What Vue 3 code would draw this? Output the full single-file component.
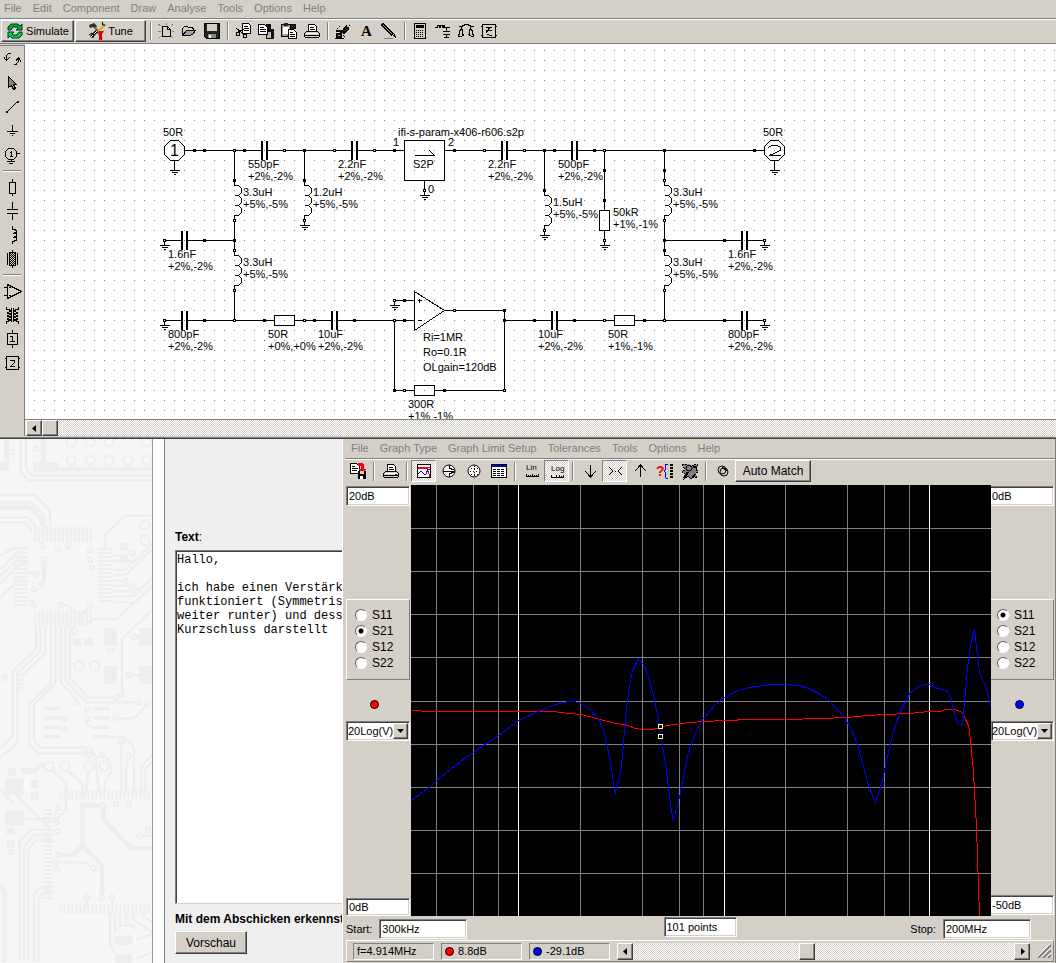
<template>
  <div class="desktop">
    <header>
      <nav class="menubar">
        <a v-for="item in mainMenu" :key="item" href="#">{{ item }}</a>
      </nav>
      <div class="toolbar">
        <button class="raised sim-btn">
          <svg width="18" height="18" viewBox="0 0 18 18" v-html="icons.simulate"></svg>
          Simulate
        </button>
        <button class="raised tune-btn">
          <svg width="18" height="18" viewBox="0 0 18 18" v-html="icons.tune"></svg>
          Tune
        </button>
        <template v-for="(group, g) in mainTools" :key="g">
          <span class="sep"></span>
          <button v-for="name in group" :key="name" class="tool" :aria-label="name">
            <svg width="16" height="16" viewBox="0 0 16 16" v-html="icons[name]"></svg>
          </button>
        </template>
      </div>
    </header>

    <section class="workspace">
      <div class="palette">
        <template v-for="(group, g) in paletteTools" :key="g">
          <span v-if="g" class="hsep"></span>
          <button v-for="name in group" :key="name" class="tool" :aria-label="name">
            <svg width="20" height="20" viewBox="0 0 20 20" v-html="icons[name]"></svg>
          </button>
        </template>
      </div>
      <div class="canvas">
        <svg class="schematic">
          <defs>
            <pattern id="grid" width="10" height="10" patternUnits="userSpaceOnUse" x="9" y="6">
              <rect width="1" height="1" fill="#808080" />
            </pattern>
          </defs>
          <rect width="100%" height="100%" fill="url(#grid)" />
          <!-- drawing uses the sheet coordinates, the sheet starts at 25,44 -->
          <g transform="translate(-25 -44)">
            <g class="lines" transform="translate(.5 .5)">
              <path :d="wires" />
              <path v-for="c in grounds" :key="'g' + c" :d="groundPath(c)" />
              <path v-for="(p, i) in parts" :key="'p' + i" :d="partPath(p)" />
              <g v-for="(p, i) in caps" :key="'c' + i" class="solid">
                <rect :x="p.x - 3" :y="p.y - 9" width="1" height="18" />
                <rect :x="p.x + 2" :y="p.y - 9" width="1" height="18" />
              </g>
              <path d="M170 140h8l6 6v8l-6 6h-8l-6-6v-8z M770 140h8l6 6v8l-6 6h-8l-6-6v-8z" />
              <path d="M404 140h40v40h-40z" />
              <path d="M414 155h20l-5-5" />
              <path d="M414 291l30 19-30 20z" />
              <path d="M417 300h4M419 298v4M417 320h4" />
              <path d="M768 147l3-2h6l3 2v3l-11 5h11" />
              <rect v-for="n in filled" :key="'f' + n" class="solid" :x="n[0] - 1" :y="n[1] - 1" width="2" height="2" />
              <rect v-for="n in open" :key="'o' + n" class="blank" :x="n[0] - 1" :y="n[1] - 1" width="2" height="2" />
            </g>
            <g v-for="(p, i) in parts" :key="'t' + i">
              <text :x="labelX(p)" :y="labelY(p)">{{ p.value }}</text>
              <text :x="labelX(p)" :y="labelY(p) + 12">{{ p.tol }}</text>
            </g>
            <text v-for="t in notes" :key="t.text + t.x" :x="t.x" :y="t.y">{{ t.text }}</text>
            <text class="port" x="170" y="156">1</text>
          </g>
        </svg>
        <div class="scroll main-scroll">
          <button class="raised arrow" aria-label="Scroll left"><svg width="7" height="7" viewBox="0 0 7 7"><path d="M5 0v7L1 3.5z" /></svg></button>
          <span class="raised thumb"></span>
        </div>
      </div>
    </section>

    <section class="lower">
      <div class="pcb">
        <svg width="152" height="525" viewBox="0 0 456 1575" preserveAspectRatio="xMinYMin slice">
          <g class="trace">
            <path d="M62 0v98l22 26h372M78 0v88l18 22h360M0 168h106l44 46v50M0 190h94l40 40v34M0 236h84l22 22v20M0 250h74l18 18v12" />
            <path d="M315 326v-38l62-58h79M340 350h36l22-8M340 366h60l16-4M340 392h36l80-78M340 408h36l80-78M340 424h36M340 440h56M340 456h70M340 472h60l56-56M340 490h66l50-50" />
            <path d="M84 326H42L0 350M84 340H52L0 392M84 356H58L0 412M84 372H62L0 434M84 402h20M84 424h-30L0 478M84 486h18M132 360v64" />
            <path d="M108 560v70l-70 66v194L0 930M122 560v76l-70 66v210L0 956M136 560v82l-70 68" />
            <path d="M152 560v174l-64 60v120l28 30h154M166 560v174l-64 62v108l20 22h136M182 560v170l56 60M196 560v164l62 66h156M210 560v156l54 60h84M222 560v30" />
            <path d="M180 500h24l16 20M240 560v-30l30-24M256 560l20-20h76l104-100M366 770V600l90-88M386 708h36M410 594h46" />
            <path d="M180 838h12M180 866h12M262 838v20l18 8M348 838h54l42-44M300 894h70l32 30v138M364 908v154M386 950l-8 40v70M456 950l-32 32v80M456 970l-20 20v70" />
            <path d="M148 984l50 50v80l-18 18M192 984l56 52v40M264 984v20l-6 56M268 926l20 26v34l10 74M310 950l24 24v24l-20 30v32" />
            <path d="M42 1060l106 106M70 1140h92M0 1050l40 44M160 1172H92l-34 36v360M160 1188h-60l-28 34v346M160 1204h-54l-20 26v338M160 1345h-38l-20 20v203M160 1360h-30l-14 18v190" />
            <path d="M176 1270h80l22 18M414 1190h42M260 1376v24M336 1376v24M360 1420v40h40M378 1420v30l30 20M400 1420v20l56 40M430 1420v10l26 20M330 1420v100l30 40M345 1420v60M410 1500l46-14M410 1560l46-20" />
          </g>
          <g class="bus">
            <path d="M0 84h20V0M456 90H130V0M0 205h90l36 36v20M98 1002l20-22h30M248 1090v130l-30 28h-44M248 1100h62v40l84 88h62M248 1220l58 58v98M0 1340l14 20v208M132 365v60" />
          </g>
          <g class="pad">
            <path d="M312 568h38v52h-38zM418 568h38v52h-38zM312 680h38v54h-38zM418 680h38v54h-38zM14 1018h56v50H14zM14 1114h56v46H14zM24 986h24v24H24zM62 986h34v20H62zM92 1024h24v22H92zM92 1060h24v24H92zM20 1166h24v22H20zM20 1204h24v22H20zM360 312h22v22h-22zM360 348h22v22h-22zM218 598h24v22h-24zM254 598h24v22h-24zM100 70h74v28h-74zM0 70h24v26H0z" />
            <path d="M132 804h48v10h-48zM132 832h48v10h-48zM132 860h48v10h-48zM132 888h48v10h-48zM280 804h48v10h-48zM280 832h48v10h-48zM280 860h48v10h-48zM280 888h48v10h-48z" />
            <rect x="342" y="1490" width="58" height="28" rx="14" /><rect x="342" y="1546" width="58" height="28" rx="14" />
          </g>
          <path class="pins" d="M102 286h174M102 538h174" />
          <path class="pins short" d="M178 1068h276M178 1410h276" />
          <path class="pins sides" d="M62 326v174M316 326v166" />
          <path class="pins short" d="M143 1110v270" />
          <g class="via">
            <circle v-for="v in vias" :key="v" :cx="v[0]" :cy="v[1]" r="7" />
            <circle v-for="v in bigVias" :key="v" :cx="v[0]" :cy="v[1]" r="14" />
          </g>
        </svg>
      </div>

      <form class="post" @submit.prevent>
        <label for="post-text"><b>Text</b>:</label>
        <textarea id="post-text" v-model="message" wrap="off"></textarea>
        <p>Mit dem Abschicken erkennst</p>
        <button class="raised">Vorschau</button>
      </form>

      <div class="graph">
        <nav class="menubar">
          <a v-for="item in graphMenu" :key="item" href="#">{{ item }}</a>
        </nav>
        <div class="toolbar">
          <template v-for="(group, g) in graphTools" :key="g">
            <span v-if="g" class="sep"></span>
            <button v-for="name in group" :key="name" class="tool" :class="{ checked: checked.includes(name) }" :aria-label="name">
              <svg width="18" height="18" viewBox="0 0 18 18" v-html="icons[name]"></svg>
            </button>
          </template>
          <button class="raised match">Auto Match</button>
        </div>

        <div class="plot-row">
          <div v-for="side in sides" :key="side.id" class="side" :class="side.id">
            <input v-model="side.top" type="text" :aria-label="side.id + ' axis top'">
            <fieldset>
              <label v-for="s in params" :key="s">
                <input v-model="side.param" type="radio" :name="side.id" :value="s">{{ s }}
              </label>
            </fieldset>
            <i class="dot"></i>
            <div class="combo">
              <select v-model="side.scale" :aria-label="side.id + ' scale'">
                <option>20Log(V)</option>
              </select>
              <span class="raised"><svg width="7" height="4" viewBox="0 0 7 4"><path d="M0 0h7L3.5 4z" /></svg></span>
            </div>
            <input v-model="side.bottom" class="bottom" type="text" :aria-label="side.id + ' axis bottom'">
          </div>
          <svg class="plot" viewBox="411 485 580 431" preserveAspectRatio="none">
            <rect x="411" y="485" width="580" height="431" />
            <g transform="translate(.5 .5)">
              <path v-for="y in hLines" :key="'h' + y" class="minor" :d="`M410 ${y}H992`" />
              <path v-for="x in vLines" :key="'v' + x" class="minor" :d="`M${x} 484V917`" />
              <path v-for="x in decades" :key="'d' + x" class="major" :d="`M${x} 484V917`" />
              <polyline class="s21" :points="s21" />
              <polyline class="s11" :points="s11" />
              <g v-for="y in [726, 736]" :key="y">
                <rect x="658" :y="y - 2" width="4" height="4" class="marker" />
                <path :d="`M658 ${y - 1}v3M662 ${y - 1}v3`" class="marker-side" />
              </g>
            </g>
          </svg>
        </div>

        <div class="range">
          <div>
            <label for="start">Start:</label>
            <input id="start" v-model="start" type="text">
          </div>
          <input v-model="points" class="points" type="text" aria-label="Points">
          <div class="stop">
            <label for="stop">Stop:</label>
            <input id="stop" v-model="stop" type="text">
          </div>
        </div>

        <div class="status">
          <span class="cell">f=4.914MHz</span>
          <span class="cell"><i class="dot red"></i>8.8dB</span>
          <span class="cell"><i class="dot"></i>-29.1dB</span>
          <div class="scroll">
            <button class="raised arrow" aria-label="Marker down"><svg width="7" height="7" viewBox="0 0 7 7"><path d="M5 0v7L1 3.5z" /></svg></button>
            <div class="track"><span class="raised thumb"></span></div>
            <button class="raised arrow" aria-label="Marker up"><svg width="7" height="7" viewBox="0 0 7 7"><path d="M2 0v7l4-3.5z" /></svg></button>
          </div>
          <svg class="grip" width="14" height="14" viewBox="0 0 14 14">
            <path d="M1 14L14 1M6 14l8-8M11 14l3-3" stroke="#808080" stroke-width="2" />
            <path d="M0 13L13 0M5 13l9-9M10 13l4-4" stroke="#fff" />
          </svg>
        </div>
      </div>
    </section>
  </div>
</template>

<script setup>
import { ref, reactive } from 'vue'

const mainMenu = ['File', 'Edit', 'Component', 'Draw', 'Analyse', 'Tools', 'Options', 'Help']
const graphMenu = ['File', 'Graph Type', 'Graph Limit Setup', 'Tolerances', 'Tools', 'Options', 'Help']

const mainTools = [
  ['new', 'open', 'save'],
  ['cut', 'copy', 'paste', 'print'],
  ['erase', 'text', 'pencil'],
  ['calculator', 'lcMatch', 'filter', 'noise']
]
const paletteTools = [
  ['rotate', 'pointer', 'wire', 'ground', 'source'],
  ['resistor', 'capacitor', 'inductor', 'crystal'],
  ['opamp', 'transformer', 'onePort', 'twoPort']
]
const graphTools = [
  ['export'],
  ['printGraph'],
  ['rect', 'smith', 'polar', 'table'],
  ['lin', 'log'],
  ['down', 'center', 'up', 'help', 'stats'],
  ['rings']
]
const checked = ['rect', 'log', 'center']

const printer = '<path d="M4.500 8.500v-7h6l2 2v5" fill="#fff" stroke="#000"/><path d="M6 4.500h4M6 6.500h5" stroke="#000"/><path d="M2.500 8.500h11l2 2v3l-1 1h-13l-1-1v-3z" fill="#d4d0c8" stroke="#000"/><path d="M2 10.500h12" stroke="#fff"/><path d="M1 12.500h14" stroke="#000"/>'

// small toolbar drawings, stroked on half pixels
const icons = {
  simulate: '<path d="M2 8V5l3-3h7l2 2 2-2v6h-6l2-2-1-1H7L5 8z" fill="#00b000" stroke="#002850"/><path d="M16 10v3l-3 3H6l-2-2-2 2v-6h6l-2 2 1 1h4l2-3z" fill="#00d820" stroke="#002850"/>',
  tune: '<path d="M1 3l5-2 3 3-2 3-2-2-3 1z" fill="#303030"/><path d="M7 5l7 12" stroke="#906030" stroke-width="2"/><path d="M14 1l2 3-6 5" stroke="#e0b020" stroke-width="2" fill="none"/><path d="M14.500 0v3h3" stroke="#000" fill="none"/><path d="M3 15l6-6" stroke="#000" stroke-width="3"/><path d="M3 15l6-6" stroke="#fff"/><path d="M1 13l3-2 2 2-1 3" fill="none" stroke="#000"/><path d="M11 9h5l-2 3v6h-3z" fill="#e00000"/>',
  new: '<path d="M4.500 3.500h5l3 3v7h-8z" fill="#d4d0c8" stroke="#000"/><path d="M9.500 3.500v3h3" fill="none" stroke="#000"/><path d="M0 1l3 2M8 0v2M15 1l-2 2M0 8h3M14 8h2M1 15l2-2M15 15l-2-2" stroke="#808080"/>',
  open: '<path d="M1.500 12.500v-7l2-2h3l1 1h4l1 2v1" fill="#d4d0c8" stroke="#000"/><path d="M1.500 12.500l4-5h9l-3 4-3 1z" fill="#a0a0a0" stroke="#000"/>',
  save: '<path d="M.5 .5h15v15h-13l-2-2z" fill="#222" stroke="#000"/><path d="M3 1h10v7H3z" fill="#d4d0c8"/><path d="M4 11h8v4H4z" fill="#888"/><path d="M5 12h2v3H5z" fill="#fff"/>',
  cut: '<path d="M7.500 .500h6l2 2v8h-8z" fill="#fff" stroke="#000"/><path d="M9 3.500h4M9 5.500h5M9 7.500h5" stroke="#000"/><path d="M1 5l9 7M1 10l8-4" stroke="#000"/><path d="M1.500 9.500h3v3h-3zM8.500 11.500h3v3h-3z" fill="none" stroke="#000"/>',
  copy: '<path d="M8 1h5v5h3v10H8z" fill="#111"/><path d="M9 9h4v6H9z" fill="#bbb"/><path d="M.5 1.500h6l3 3v7h-9z" fill="#fff" stroke="#000"/><path d="M2 4.500h4M2 6.500h6M2 8.500h6" stroke="#000"/>',
  paste: '<path d="M.5 1.500h9v12h-9z" fill="#999" stroke="#000"/><path d="M3 0h4v3H3z" fill="#222"/><path d="M2 4h6v7H2z" fill="#fff"/><path d="M10 1h5v5h-5z" fill="#111"/><path d="M7.500 6.500h5l3 3v6h-8z" fill="#fff" stroke="#000"/><path d="M9 9.500h3M9 11.500h5M9 13.500h5" stroke="#000"/>',
  print: printer,
  printGraph: '<g transform="translate(1 1)">' + printer + '<path d="M12 11.500h2" stroke="#f00"/></g>',
  erase: '<path d="M15 1l-5 2-4 6 3 3 5-6z" fill="#111"/><path d="M15 1l-4 2 2 2z" fill="#bbb"/><path d="M1 8h5v6H2v-3h3" fill="none" stroke="#000" stroke-width="2"/><path d="M0 15h9M2 5h1M4 3h1M8 12l2 2" stroke="#000"/>',
  text: '<text x="3" y="13" font-family="Liberation Serif" font-weight="bold" font-size="15">A</text>',
  pencil: '<path d="M1 1l11 11" stroke="#000" stroke-width="4"/><path d="M2 2l9 9" stroke="#999"/><path d="M11 12l4 3-1-4z"/><path d="M3 15.500h9" stroke="#808080"/>',
  calculator: '<path d="M2.500 .5h11v15h-11z" fill="#d4d0c8" stroke="#000"/><path d="M4 3.500h8" stroke="#000" stroke-width="3"/><path d="M4 7.500h8M4 9.500h8M4 11.500h8M4 13.500h8" stroke="#000" stroke-dasharray="1 1"/>',
  lcMatch: '<path d="M0 4.500h2l1-2h1l1 2 1-2h1l1 2 1-2 1 2h5M11.500 5v3M8 8.500h7M8 11.500h7M11.500 12v3M9 14.500h5" stroke="#000" fill="none"/>',
  filter: '<path d="M1 3.500h3l1-1h1l1-1h3l1 1h1l1 1h3M3.500 4v2l1 1v4l1 1M3.500 6l-2 2v3l-1 1v1h3M5.500 12.500h-2M12.500 4v2l-1 1v4l-1 1M12.500 6l2 2v3l1 1v1h-3M10.500 12.500h2" stroke="#000" fill="none"/>',
  noise: '<path d="M1.500 1.500h13v13h-13zM0 3.500h1M0 12.500h1M15 3.500h1M15 12.500h1" stroke="#000" fill="none"/><path d="M5 5l2-1 2 1 2-1M5 8l2-1 2 1 2-1M6 11l2 1 3 0M9 4l-4 6" stroke="#000" fill="none"/>',
  rotate: '<path d="M9 4.500H6.500l-2 2v5M2 8.500l2.500 3 3-3M12 15.500h2l2.500-3V8M19 12.500l-2.500-4-3 4" fill="none" stroke="#000"/>',
  pointer: '<path d="M6.500 3.500v11l3-2 2 4 2-1-2-4h3z" fill="#808080" stroke="#000"/>',
  wire: '<path d="M5 15L15 5" stroke="#000"/><path d="M4 14h2v2H4zM15 4h2v2h-2z"/>',
  ground: '<path d="M10.500 4v7M5 10.500h11M8 12.500h5M10 14.500h1" stroke="#000"/>',
  source: '<path d="M6.500 3.500h5l3 3v5l-3 3h-5l-3-3v-5z" fill="none" stroke="#000"/><path d="M15 8.500h3M9.500 14v2M5 16.500h8M7 18.500h4M9.500 6v6M8 7.500h1M8 11.500h3" stroke="#000"/>',
  resistor: '<path d="M10.500 2v3M10.500 16v3M7.500 5.500h6v11h-6z" fill="none" stroke="#000"/>',
  capacitor: '<path d="M10.500 1v7M5 8.500h11M5 12.500h11M10.500 13v6" stroke="#000"/>',
  inductor: '<path d="M10.500 1v3h2l2 2v1l-2 1h-2 2l2 1v2l-2 1h-2 2l2 1v2l-2 1h-2v3" fill="none" stroke="#000"/>',
  crystal: '<path d="M10.500 1v3M10.500 16v3M5.500 4v12M15.500 4v12M7.500 3.500h6v13h-6z" fill="none" stroke="#000"/><path d="M8 4.500h5M8 6.500h5M8 8.500h5M8 10.500h5M8 12.500h5M8 14.500h5" stroke="#000" stroke-dasharray="1 1"/><path d="M9 5.500h5M9 7.500h5M9 9.500h5M9 11.500h5M9 13.500h5M9 15.500h5" stroke="#000" stroke-dasharray="1 1"/>',
  opamp: '<path d="M5.500 3.500v14l14-7zM2 6.500h3M2 14.500h3M7 6.500h2M7 14.500h2" fill="none" stroke="#000"/>',
  transformer: '<path d="M4.500 2v2l3 1 1 1-3 2 3 1-3 2 3 1-3 2 3 1-4 2v2M16.500 2v2l-3 1-1 1 3 2-3 1 3 2-3 1 3 2-3 1 4 2v2M9.500 3v14M11.500 3v14" fill="none" stroke="#000"/>',
  onePort: '<path d="M10.500 1v3M10.500 16v3M5.500 4.500h10v11h-10z" fill="none" stroke="#000"/><path d="M8 7.500h2.500V13M8 12.500h5" fill="none" stroke="#000"/>',
  twoPort: '<path d="M4.500 3.500h12v13h-12zM3 5.500h1M3 14.500h1M17 5.500h1M17 14.500h1" fill="none" stroke="#000"/><path d="M8 7.500h4.500v2l-4 4h4.500" fill="none" stroke="#000"/>',
  export: '<path d="M1.500 1.500h6l3 3v7h-9z" fill="#fff" stroke="#000"/><path d="M3 4.500h3M3 6.500h6M3 8.500h5" stroke="#000"/><path d="M9 1h4l2 2v4h2l-4 4-3-4h2V4H9z" fill="#f00"/><path d="M9 9h8v8H9z"/><path d="M11 9h4v3h-4z" fill="#d4d0c8"/><path d="M11 14h3v3h-3z" fill="#fff"/>',
  rect: '<path d="M2.500 2.500h13v13h-13z" fill="#fff" stroke="#000"/><path d="M3 6.500h9l3 8" stroke="#f00" fill="none"/><path d="M3 12l3-3 3 3h2l2-5h2" stroke="#00f" fill="none"/><path d="M3 5.500h12" stroke="#f00"/>',
  smith: '<circle cx="9" cy="9" r="6" fill="#fff" stroke="#000"/><path d="M3 9h12M9 3v3l5 2M9 15v-3l5-2" stroke="#000" fill="none"/>',
  polar: '<circle cx="9" cy="9" r="6" fill="#fff" stroke="#000"/><path d="M5 9.500h9M6 6.500h7M6 12.500h7" stroke="#000" stroke-dasharray="1 2"/><path d="M9.500 4v11" stroke="#000" stroke-dasharray="1 2"/>',
  table: '<path d="M1.500 2.500h15v13h-15z" fill="#fff" stroke="#000"/><path d="M2 4h14" stroke="#0000c0" stroke-width="2"/><path d="M3 7.500h12M3 9.500h12M3 11.500h12M3 13.500h12" stroke="#000" stroke-dasharray="3 1"/>',
  lin: '<text x="3" y="8" font-family="Liberation Sans" font-size="8">Lin</text><path d="M3 14.500h13M3.500 12v2M5.500 13v1M7.500 13v1M9.500 12v2M11.500 13v1M13.500 13v1M15.500 12v2" stroke="#000"/>',
  log: '<text x="3" y="9" font-family="Liberation Sans" font-size="8">Log</text><path d="M3 15.500h13M3.500 13v2M8.500 13v2M11.500 13v2M13.500 14v1M15.500 13v2" stroke="#000"/>',
  down: '<path d="M9.500 3v12M4 9l5.500 6L15 9" fill="none" stroke="#000"/>',
  center: '<path d="M3 5l4 4-4 4M16 5l-4 4 4 4M9 9.500h1" fill="none" stroke="#000"/>',
  up: '<path d="M9.500 15V3M4 9l5.500-6L15 9" fill="none" stroke="#000"/>',
  help: '<text x="0" y="14" font-family="Liberation Sans" font-weight="bold" font-size="14" fill="#f00">?</text><path d="M12 2h-2L9 4v4l-1 1 1 1v4l1 2h2" fill="none" stroke="#00f"/><path d="M15 2v15" stroke="#000" stroke-width="3" stroke-dasharray="2 1"/>',
  stats: '<path d="M1 2h4v3l3-2 3 2 2-3 4 1-2 4 2 3-3 2 2 4-4-2-2 3-3-3-4 3 1-5-3-2 3-2z" fill="#808080" stroke="#000" stroke-dasharray="2 1"/><circle cx="8" cy="6" r="3" fill="none" stroke="#000"/><path d="M3 16l4-6M12 16l2-4M12 5h4" stroke="#000" stroke-width="2"/>',
  rings: '<circle cx="8" cy="8" r="4" fill="none" stroke="#000"/><circle cx="10" cy="10" r="4" fill="none" stroke="#000"/><path d="M8 5l5 4" stroke="#000"/>'
}

// schematic
const cap = (x, y, value) => ({ type: 'cap', x, y, value, tol: '+2%,-2%' })
const coil = (x, y, value) => ({ type: 'coil', x, y, value, tol: '+5%,-5%' })
const res = (x, y, value, tol) => ({ type: 'res', x, y, value, tol })

const parts = [
  cap(264, 150, '550pF'), cap(354, 150, '2.2nF'), cap(504, 150, '2.2nF'), cap(574, 150, '500pF'),
  cap(184, 240, '1.6nF'), cap(744, 240, '1.6nF'),
  cap(184, 320, '800pF'), cap(334, 320, '10uF'), cap(554, 320, '10uF'), cap(744, 320, '800pF'),
  coil(234, 200, '3.3uH'), coil(304, 200, '1.2uH'), coil(234, 270, '3.3uH'),
  coil(544, 210, '1.5uH'), coil(664, 200, '3.3uH'), coil(664, 270, '3.3uH'),
  res(284, 320, '50R', '+0%,+0%'), res(624, 320, '50R', '+1%,-1%'), res(424, 390, '300R', '+1% -1%'),
  { type: 'vres', x: 604, y: 220, value: '50kR', tol: '+1%,-1%' }
]
const caps = parts.filter(p => p.type === 'cap')

const isVertical = p => p.type === 'coil' || p.type === 'vres'
const labelX = p => (isVertical(p) ? p.x + 9 : p.x - 16)
const labelY = p => (isVertical(p) ? p.y - 4 : p.y + 18)

const partPath = ({ type, x, y }) => {
  if (type === 'cap') return `M${x - 20} ${y}h17M${x + 3} ${y}h17`
  if (type === 'res') return `M${x - 20} ${y}h10M${x + 10} ${y}h10M${x - 10} ${y - 5}h20v10h-20z`
  if (type === 'vres') return `M${x} ${y - 20}v10M${x} ${y + 10}v10M${x - 5} ${y - 10}h10v20h-10z`
  return `M${x} ${y - 20}v5h4l3 3v4l-3 3h-4h4l3 3v4l-3 3h-4h4l3 3v4l-3 3h-4v5`
}
const groundPath = ([x, y]) => `M${x} ${y}v5M${x - 5} ${y + 5}h10M${x - 3} ${y + 7}h6M${x - 1} ${y + 9}h2`

const wires = [
  'M184 150H244M284 150H334M374 150H404M444 150H484M524 150H554M594 150H764',
  'M234 150V180M234 220V250M234 290V320M304 150V180M544 150V190M604 150V200',
  'M664 150V180M664 220V250M664 290V320M204 240H234M664 240H724',
  'M204 320H264M304 320H314M354 320H414M394 320V390H404M444 390H504V310H444',
  'M504 320H534M574 320H604M644 320H724M394 300H414M424 180V190M174 160V165M774 160V165'
].join('')

const grounds = [
  [174, 165], [774, 165], [304, 220], [164, 240], [164, 320], [394, 300],
  [424, 190], [544, 230], [604, 240], [764, 240], [764, 320]
]
const filled = [
  [194, 150], [204, 150], [244, 150], [304, 150], [394, 150], [454, 150], [544, 150], [554, 150],
  [594, 150], [664, 150], [754, 150], [234, 180], [304, 180], [544, 190], [604, 170], [604, 200],
  [664, 170], [664, 240], [664, 250], [724, 240], [204, 240], [234, 240], [204, 320], [264, 320],
  [314, 320], [354, 320], [404, 320], [404, 300], [504, 310], [504, 320], [394, 390], [444, 390],
  [534, 320], [574, 320], [644, 320], [724, 320]
]
const open = [
  [234, 150], [284, 150], [334, 150], [374, 150], [484, 150], [524, 150], [604, 150], [234, 220],
  [304, 220], [234, 250], [234, 290], [234, 320], [164, 240], [164, 320], [304, 320], [394, 320],
  [394, 300], [454, 310], [404, 390], [504, 390], [424, 190], [544, 230], [604, 240], [664, 180],
  [664, 220], [664, 290], [664, 320], [604, 320], [764, 240], [764, 320]
]
const notes = [
  { text: '50R', x: 163, y: 136 },
  { text: '50R', x: 763, y: 136 },
  { text: 'ifi-s-param-x406-r606.s2p', x: 398, y: 136 },
  { text: '1', x: 393, y: 146 },
  { text: '2', x: 448, y: 146 },
  { text: '0', x: 428, y: 193 },
  { text: 'S2P', x: 413, y: 168 },
  { text: 'Ri=1MR', x: 423, y: 341 },
  { text: 'Ro=0.1R', x: 423, y: 356 },
  { text: 'OLgain=120dB', x: 423, y: 371 }
]

// board artwork behind the page
const vias = [
  [34, 38], [108, 30], [128, 320], [204, 320], [174, 332], [130, 360], [108, 406], [126, 434], [102, 450], [102, 498],
  [270, 334], [270, 362], [276, 386], [398, 344], [416, 364], [376, 426], [396, 442], [410, 458], [184, 498], [270, 500],
  [222, 576], [332, 634], [404, 594], [386, 708], [364, 766], [348, 776], [228, 790], [416, 790], [442, 794], [14, 716],
  [60, 716], [60, 742], [192, 838], [192, 870], [262, 812], [262, 838], [348, 836], [256, 932], [270, 948], [306, 948],
  [364, 908], [386, 952], [310, 1100], [348, 1094], [386, 1094], [176, 1106], [172, 1130], [170, 1150], [172, 1176],
  [174, 1248], [168, 1270], [170, 1292], [280, 1288], [418, 1190], [444, 1172], [260, 1376], [304, 1376], [336, 1376], [32, 1240]
]
const bigVias = [
  [214, 8], [271, 8], [327, 8], [440, 8], [214, 64], [271, 64], [327, 64], [384, 64], [440, 64],
  [434, 258], [434, 304], [238, 680], [284, 680], [148, 982], [194, 982], [266, 982], [312, 982]
]

const message = ref('Hallo,\n\nich habe einen Verstärke\nfunktioniert (Symmetrisc\nweiter runter) und desse\nKurzschluss darstellt')

// graph window
const params = ['S11', 'S21', 'S12', 'S22']
const sides = reactive([
  { id: 'left', top: '20dB', bottom: '0dB', param: 'S21', scale: '20Log(V)' },
  { id: 'right', top: '0dB', bottom: '-50dB', param: 'S11', scale: '20Log(V)' }
])
const start = ref('300kHz')
const stop = ref('200MHz')
const points = ref('101 points')

const hLines = [528, 571, 614, 657, 701, 744, 787, 830, 873]
const vLines = [436, 473, 498, 580, 642, 679, 703, 785, 847, 884, 909]
const decades = [518, 724, 929]

const s21 = '411,710 420,710 421,711 552,711 568,713 580,714 593,717 603,720 616,723 627,725 635,728 642,729 650,729 658,728 662,726 674,724 690,722 703,721 724,720 736,720 738,719 785,719 820,718 847,717 866,715 884,714 909,713 929,711 940,711 945,709 954,709 960,711 963,714 965,719 968,725 970,740 973,772 974,790 976,826 977,857 978,885 979,916'
const s11 = '411,800 430,786 436,780 460,761 473,752 498,735 518,720 540,710 555,704 568,701 574,701 580,703 590,709 598,718 603,730 608,752 612,775 614,790 615,792 617,782 620,773 622,755 624,730 627,700 630,680 632,670 638,658 643,664 648,677 653,695 656,710 660,729 662,745 666,770 669,797 672,817 673,819 679,797 682,783 685,765 689,748 697,728 703,718 715,704 724,697 735,691 748,687 770,684 785,684 798,685 808,688 820,694 830,701 843,716 850,727 857,744 862,763 868,785 875,802 877,797 882,780 885,765 890,743 895,725 900,711 909,693 918,686 924,684 929,684 937,688 946,690 950,696 954,713 957,723 962,725 963,714 965,690 968,658 970,645 974,629 976,647 979,672 985,686 989,700 990,706'
</script>

<style>
body {
  margin: 0;
}
</style>

<style scoped>
.desktop {
  display: grid;
  grid-template-rows: auto minmax(395px, 3fr) minmax(524px, 4fr);
  height: 100vh;
  overflow: hidden;
  background: #d4d0c8;
  color: #000;
  font: 11px/13px "Liberation Sans", Arial, sans-serif;
}

button,
input,
select,
textarea {
  font: inherit;
  color: inherit;
  border-radius: 0;
  box-sizing: border-box;
  margin: 0;
}

.menubar {
  display: flex;
  gap: 11px;
  height: 18px;
  padding-left: 4px;
  border-bottom: 1px solid #808080;
  box-shadow: 0 1px 0 #fff;
  margin-bottom: 1px;
}

.menubar a {
  color: #808080;
  text-decoration: none;
  line-height: 17px;
}

.toolbar {
  display: flex;
  height: 23px;
  border-bottom: 1px solid #808080;
}

.raised {
  background: #d4d0c8;
  border: 1px solid;
  border-color: #fff #404040 #404040 #fff;
  box-shadow: inset -1px -1px 0 #808080;
  padding: 0;
}

.sim-btn,
.tune-btn {
  display: flex;
  align-items: center;
  justify-content: center;
  gap: 2px;
  width: 73px;
  height: 22px;
  margin-left: 1px;
}

.tune-btn {
  width: 71px;
}

.sep {
  width: 2px;
  margin: 2px 3px 3px;
  box-sizing: border-box;
  border-left: 1px solid #808080;
  border-right: 1px solid #fff;
}

header .sep {
  margin: 2px 2px 3px 4px;
}

.tool {
  display: flex;
  align-items: center;
  justify-content: center;
  width: 23px;
  height: 22px;
  padding: 0;
  border: 0;
  background: none;
}

.tool svg {
  flex: none;
  shape-rendering: crispEdges;
}

.tool :deep(circle) {
  shape-rendering: auto;
}

.workspace {
  display: flex;
  min-height: 0;
  border-bottom: 1px solid #404040;
  box-shadow: inset 0 -1px 0 #808080;
  padding-bottom: 2px;
}

.palette {
  width: 24px;
  flex: none;
  margin-top: 1px;
  padding-top: 1px;
  border-top: 1px solid #808080;
  border-right: 1px solid #808080;
  box-sizing: content-box;
}

.palette .tool {
  width: 24px;
  height: 24px;
}

.hsep {
  display: block;
  height: 0;
  margin: 3px;
  border-top: 1px solid #808080;
  border-bottom: 1px solid #fff;
}

.canvas {
  flex: 1;
  min-width: 0;
  display: flex;
  flex-direction: column;
  background: #fff;
}

.schematic {
  flex: 1;
  width: 100%;
  min-height: 0;
  font-size: 11px;
}

.schematic .port {
  font-size: 16px;
}

.lines {
  shape-rendering: crispEdges;
  fill: none;
  stroke: #000;
}

.lines .solid {
  fill: #000;
}

.lines .blank {
  fill: #fff;
}

.scroll {
  display: flex;
  height: 16px;
  background: repeating-conic-gradient(#fff 0 25%, #d4d0c8 0 50%) 0 0 / 2px 2px;
}

.main-scroll {
  border-top: 1px solid #808080;
  padding-left: 1px;
}

.arrow,
.thumb {
  width: 16px;
  height: 16px;
  flex: none;
  box-sizing: border-box;
  display: flex;
  align-items: center;
  justify-content: center;
}

.lower {
  display: flex;
  min-height: 0;
  background: linear-gradient(#d4d0c8, #d4d0c8) 342px 0 / 1px 100% no-repeat #fff;
}

.pcb {
  width: 152px;
  flex: none;
  overflow: hidden;
  background: #f7f7f7;
  border-right: 1px solid #999;
  margin-right: 11px;
}

.pcb svg {
  display: block;
}

.trace,
.bus,
.via,
.pins {
  fill: none;
  stroke: #eee;
  stroke-width: 7;
}

.bus {
  stroke-width: 14;
}

.pad {
  fill: #eee;
}

.pins {
  stroke-width: 44;
  stroke-dasharray: 7 5;
}

.pins.sides {
  stroke-width: 42;
}

.pins.short {
  stroke-width: 26;
}

.via {
  fill: #f7f7f7;
  stroke-width: 6;
}

.post {
  width: 178px;
  flex: none;
  display: flex;
  flex-direction: column;
  align-items: flex-start;
  box-sizing: border-box;
  padding: 90px 0 9px 10px;
  border-left: 1px solid #808080;
  background: #efefef;
  overflow: hidden;
  font-size: 12px;
  line-height: 16px;
}

.post textarea {
  width: 500px;
  flex: 1;
  margin-top: 5px;
  padding: 2px 1px;
  border: 1px solid;
  border-color: #808080 #d4d0c8 #d4d0c8 #808080;
  box-shadow: inset 1px 1px 0 #404040;
  background: #fff;
  resize: none;
  overflow: hidden;
  font: 12px/14px "Liberation Mono", "Courier New", monospace;
  outline: none;
}

.post p {
  margin: 7px 0 4px;
  font-weight: bold;
  white-space: nowrap;
}

.post button {
  width: 72px;
  height: 23px;
}

.graph {
  flex: 1;
  min-width: 0;
  display: flex;
  flex-direction: column;
  background: #d4d0c8;
  border-left: 1px solid #fff;
  border-right: 1px solid #808080;
  padding-left: 2px;
}

.graph .menubar {
  height: 19px;
  padding-left: 6px;
}

.graph .menubar a {
  line-height: 19px;
}

.graph .toolbar {
  height: 24px;
  border-bottom: 0;
  margin-bottom: 1px;
}

.graph .tool {
  width: 25px;
}

.graph .tool.checked {
  border: 1px solid;
  border-color: #808080 #fff #fff #808080;
  background: repeating-conic-gradient(#fff 0 25%, #d4d0c8 0 50%) 0 0 / 2px 2px;
}

.match {
  width: 76px;
  height: 22px;
  font-size: 12px;
}

.plot-row {
  flex: 1;
  min-height: 0;
  display: grid;
  grid-template-columns: 66px 1fr 64px;
}

.plot {
  order: 2;
  width: 100%;
  height: 100%;
  min-height: 0;
  display: block;
  shape-rendering: crispEdges;
  fill: none;
}

.plot > rect {
  fill: #000;
}

.minor {
  stroke: #808080;
}

.major {
  stroke: #fff;
}

.s21 {
  stroke: #f00;
}

.s11 {
  stroke: #00f;
}

.marker {
  fill: #000;
  stroke: #fff;
}

.marker-side {
  stroke: #ff0;
}

.side {
  order: 1;
  min-height: 0;
  display: flex;
  flex-direction: column;
  padding: 1px 1px 0;
}

.side.right {
  order: 3;
  padding-left: 0;
}

input[type="text"],
.combo {
  border: 1px solid;
  border-color: #808080 #fff #fff #808080;
  box-shadow: inset 1px 1px 0 #404040, inset -1px -1px 0 #d4d0c8;
  background: #fff;
  height: 20px;
  padding: 1px 2px;
  min-width: 0;
  outline: none;
}

.side fieldset {
  display: flex;
  flex-direction: column;
  height: 81px;
  box-sizing: border-box;
  margin: 93px 0 0;
  padding: 7px 0 0 8px;
  min-width: 0;
  border: 1px solid;
  border-color: #fff #808080 #808080 #fff;
}

.side.right fieldset {
  padding-left: 6px;
  border-left: 0;
}

.side label {
  display: flex;
  align-items: center;
  gap: 5px;
  height: 16px;
  font-size: 12px;
}

.side input[type="radio"] {
  appearance: none;
  width: 12px;
  height: 12px;
  border: 1px solid;
  border-color: #606060 #fff #fff #606060;
  border-radius: 50%;
  background: #fff;
}

.side input[type="radio"]:checked {
  background: radial-gradient(circle, #000 0 2px, #fff 3px);
}

.dot {
  width: 7px;
  height: 7px;
  border: 1px solid #000;
  border-radius: 50%;
  background: #00f;
}

.dot.red,
.left .dot {
  background: #f00;
}

.side .dot {
  flex: none;
  margin: 20px auto 12px 24px;
}

.combo {
  position: relative;
  height: 20px;
  padding: 0;
  box-sizing: border-box;
  flex: none;
}

.combo select {
  appearance: none;
  width: 100%;
  height: 18px;
  border: 0;
  padding: 0 0 0 1px;
  background: none;
  outline: none;
}

.side.right .combo select {
  padding-left: 0;
}

.combo span {
  position: absolute;
  top: 1px;
  right: 1px;
  bottom: 1px;
  width: 13px;
  display: flex;
  align-items: center;
  justify-content: center;
  pointer-events: none;
}

.side .bottom {
  margin-top: auto;
}

.side.left .bottom {
  height: 18px;
}

.side.right .bottom {
  margin-bottom: 1px;
}

.side.right input[type="text"] {
  border-left: 0;
  padding-left: 1px;
  box-shadow: inset 0 1px 0 #404040, inset -1px -1px 0 #d4d0c8;
}

.range {
  display: grid;
  grid-template-columns: 1fr 73px 1fr;
  height: 24px;
  padding: 0 1px;
}

.range div {
  display: flex;
  align-items: center;
  padding-top: 2px;
  gap: 7px;
}

.range .stop {
  justify-content: flex-end;
  padding-right: 23px;
}

.range div input {
  width: 88px;
}

.range .points {
  margin-top: 1px;
}

.status {
  display: flex;
  align-items: center;
  gap: 7px;
  height: 20px;
  margin: 0 1px 1px;
  padding-left: 6px;
  border: 1px solid;
  border-color: #fff #808080 #808080 #fff;
}

.cell {
  display: flex;
  align-items: center;
  gap: 4px;
  width: 81px;
  height: 17px;
  box-sizing: border-box;
  padding-left: 3px;
  border: 1px solid;
  border-color: #808080 #fff #fff #808080;
}

.status .scroll {
  flex: 1;
  height: 17px;
}

.status .arrow,
.status .thumb {
  height: 17px;
}

.track {
  flex: 1;
  display: flex;
  justify-content: center;
  padding-right: 34px;
}

.grip {
  margin-right: 2px;
}
</style>
